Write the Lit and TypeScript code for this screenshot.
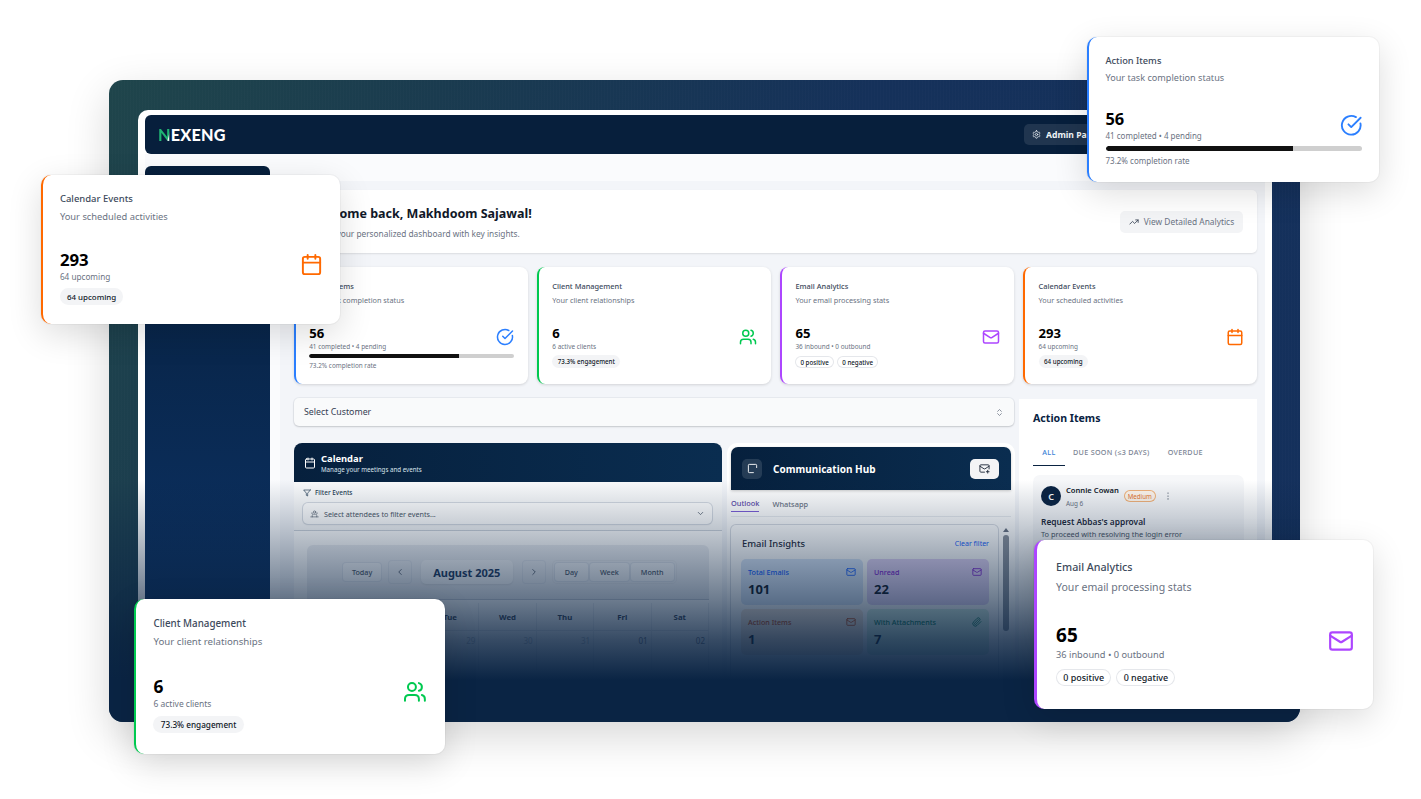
import { LitElement, html, css, svg } from "lit";
import { customElement } from "lit/decorators.js";

const I = {
  check: svg`<path d="M21.801 10A10 10 0 1 1 17 3.335"/><path d="m9 11 3 3L22 4"/>`,
  users: svg`<path d="M16 21v-2a4 4 0 0 0-4-4H6a4 4 0 0 0-4 4v2"/><circle cx="9" cy="7" r="4"/><path d="M22 21v-2a4 4 0 0 0-3-3.87"/><path d="M16 3.13a4 4 0 0 1 0 7.75"/>`,
  mail: svg`<rect x="2" y="4" width="20" height="16" rx="2"/><path d="m22 7-8.97 5.7a1.94 1.94 0 0 1-2.06 0L2 7"/>`,
  cal: svg`<path d="M8 2v4"/><path d="M16 2v4"/><rect x="3" y="4" width="18" height="18" rx="2"/><path d="M3 10h18"/>`,
  gear: svg`<path d="M12.22 2h-.44a2 2 0 0 0-2 2v.18a2 2 0 0 1-1 1.73l-.43.25a2 2 0 0 1-2 0l-.15-.08a2 2 0 0 0-2.73.73l-.22.38a2 2 0 0 0 .73 2.73l.15.1a2 2 0 0 1 1 1.72v.51a2 2 0 0 1-1 1.74l-.15.09a2 2 0 0 0-.73 2.73l.22.38a2 2 0 0 0 2.73.73l.15-.08a2 2 0 0 1 2 0l.43.25a2 2 0 0 1 1 1.73V20a2 2 0 0 0 2 2h.44a2 2 0 0 0 2-2v-.18a2 2 0 0 1 1-1.73l.43-.25a2 2 0 0 1 2 0l.15.08a2 2 0 0 0 2.73-.73l.22-.39a2 2 0 0 0-.73-2.73l-.15-.08a2 2 0 0 1-1-1.74v-.5a2 2 0 0 1 1-1.74l.15-.09a2 2 0 0 0 .73-2.73l-.22-.38a2 2 0 0 0-2.73-.73l-.15.08a2 2 0 0 1-2 0l-.43-.25a2 2 0 0 1-1-1.73V4a2 2 0 0 0-2-2z"/><circle cx="12" cy="12" r="3"/>`,
  trend: svg`<path d="M22 7 13.5 15.5 8.5 10.5 2 17"/><path d="M16 7h6v6"/>`,
  updown: svg`<path d="m7 15 5 5 5-5"/><path d="m7 9 5-5 5 5"/>`,
  down: svg`<path d="m6 9 6 6 6-6"/>`,
  left: svg`<path d="m15 18-6-6 6-6"/>`,
  right: svg`<path d="m9 18 6-6-6-6"/>`,
  funnel: svg`<polygon points="22 3 2 3 10 12.46 10 19 14 21 14 12.46 22 3"/>`,
  clip: svg`<path d="m21.44 11.05-9.19 9.19a6 6 0 0 1-8.49-8.49l8.57-8.57A4 4 0 1 1 18 8.84l-8.59 8.57a2 2 0 0 1-2.83-2.83l8.49-8.48"/>`,
  mailPlus: svg`<path d="M22 13V6a2 2 0 0 0-2-2H4a2 2 0 0 0-2 2v12c0 1.1.9 2 2 2h8"/><path d="m22 7-8.97 5.7a1.94 1.94 0 0 1-2.06 0L2 7"/><path d="M19 16v6"/><path d="M16 19h6"/>`,
  hub: svg`<path d="M21 10V5a2 2 0 0 0-2-2H5a2 2 0 0 0-2 2v14a2 2 0 0 0 2 2h9"/>`,
  people: svg`<circle cx="12" cy="8" r="3"/><path d="M6 21v-4a3 3 0 0 1 3-3h6a3 3 0 0 1 3 3v4"/><path d="M2 21h20"/><path d="M4 11h3"/><path d="M17 11h3"/>`,
  dots: svg`<circle cx="12" cy="5" r="1.5"/><circle cx="12" cy="12" r="1.5"/><circle cx="12" cy="19" r="1.5"/>`,
};

function ic(p: unknown, cls = "", sw = 2) {
  return html`<svg class="ic ${cls}" viewBox="0 0 24 24" fill="none" stroke="currentColor" stroke-width=${sw} stroke-linecap="round" stroke-linejoin="round">${p}</svg>`;
}

type Stat = { t: string; s: string; n: string; d: string; c: string; i: unknown; extra: "progress" | "pill" | "pills"; pills?: string[] };

const STATS: Record<string, Stat> = {
  action: { t: "Action Items", s: "Your task completion status", n: "56", d: "41 completed • 4 pending", c: "#2b7fff", i: I.check, extra: "progress" },
  client: { t: "Client Management", s: "Your client relationships", n: "6", d: "6 active clients", c: "#00c950", i: I.users, extra: "pill", pills: ["73.3% engagement"] },
  email: { t: "Email Analytics", s: "Your email processing stats", n: "65", d: "36 inbound • 0 outbound", c: "#ad46ff", i: I.mail, extra: "pills", pills: ["0 positive", "0 negative"] },
  cal: { t: "Calendar Events", s: "Your scheduled activities", n: "293", d: "64 upcoming", c: "#ff6900", i: I.cal, extra: "pill", pills: ["64 upcoming"] },
};

const FLOATS = [
  { k: "action", x: 1087, y: 37, w: 292, h: 145, s: 1.25 },
  { k: "cal", x: 41, y: 175, w: 299, h: 149, s: 1.28 },
  { k: "client", x: 134, y: 599, w: 311, h: 155, s: 1.325 },
  { k: "email", x: 1034, y: 540, w: 339, h: 169, s: 1.445 },
];

const TILES = [
  { l: "Total Emails", n: "101", cls: "blue", i: I.mail },
  { l: "Unread", n: "22", cls: "purple", i: I.mail },
  { l: "Action Items", n: "1", cls: "orange", i: I.mail },
  { l: "With Attachments", n: "7", cls: "green", i: I.clip },
];

@customElement("app-root")
export class AppRoot extends LitElement {
  static styles = css`
    :host { display: block; width: 1421px; height: 799px; position: relative; overflow: hidden; background: #fff; font-family: "Noto Sans", "Open Sans", sans-serif; color: #101828; }
    * { box-sizing: border-box; }
    .ic { display: block; flex: none; width: 12px; height: 12px; }

    .frame { position: absolute; left: 109px; top: 80px; width: 1191px; height: 642px; border-radius: 14px; overflow: hidden; padding: 30px 28px 0 29px; background: repeating-linear-gradient(90deg, rgba(255,255,255,.012) 0 1px, transparent 1px 3px), linear-gradient(118deg, #1f454b 0%, #1a3b4f 22%, #15315a 50%, #14305c 100%); box-shadow: 0 14px 44px rgba(0,0,0,.16); }
    .shade { position: absolute; left: 0; right: 0; top: 400px; bottom: 0; background: linear-gradient(180deg, rgba(10,35,66,0) 0px, rgba(10,35,66,.25) 50px, rgba(10,35,66,.6) 120px, rgba(10,35,66,.82) 160px, #0a2444 200px); pointer-events: none; }
    .panel { height: 100%; background: #fff; border-radius: 10px 10px 0 0; padding: 5px 7px 0; display: flex; flex-direction: column; }

    .top { height: 39px; flex: none; background: #071f3c; border-radius: 6px; display: flex; align-items: center; justify-content: space-between; padding: 0 12px 0 13px; }
    .logo { font-family: "Lato", sans-serif; font-weight: 900; font-size: 16.2px; color: #fff; letter-spacing: .2px; }
    .logo b { font-weight: 900; color: transparent; background: linear-gradient(105deg, #1fb573 72%, #e8f5ef 78%); -webkit-background-clip: text; background-clip: text; }
    .admin { width: 100px; height: 21px; border-radius: 5px; background: rgba(255,255,255,.1); color: #f1f5f9; font-size: 8.6px; font-weight: 700; display: flex; align-items: center; gap: 5px; padding-left: 8px; margin-right: 129px; margin-left: auto; }
    .admin .ic { width: 9px; height: 9px; }

    .body { flex: 1; min-height: 0; display: flex; gap: 10px; background: #fafbfd; padding-top: 12px; }
    .side { width: 125px; flex: none; background: linear-gradient(180deg, #071f3c, #0b2f5e 70%); border-radius: 6px 6px 0 0; }
    .main { flex: 1; min-width: 0; margin-top: 15px; background: #f3f5f9; padding: 9px 8px 0 14px; display: flex; flex-direction: column; gap: 14px; }

    .welcome { height: 63px; flex: none; background: #fff; border-radius: 5px; box-shadow: 0 1px 2px rgba(0,0,0,.1); display: flex; align-items: center; justify-content: space-between; padding: 0 14px 0 16px; }
    .welcome h1 { margin: 0; font-size: 12.5px; line-height: 20px; font-weight: 700; color: #101828; }
    .welcome p { margin: 4px 0 0; font-size: 8.3px; line-height: 12px; color: #6a7282; }
    .analytics { height: 22px; width: 123px; border-radius: 5px; background: #f3f4f6; color: #6a7282; font-size: 8.4px; display: flex; align-items: center; justify-content: center; gap: 5px; }
    .analytics .ic { width: 10px; height: 10px; color: #364153; }

    .stats { display: grid; grid-template-columns: repeat(4, 1fr); gap: 9.5px; flex: none; }

    .card { --u: calc(var(--s) * 10px); height: 117px; background: #fff; border-radius: calc(var(--u) * .8); border-left: calc(var(--u) * .21) solid var(--c); box-shadow: 0 1px 3px rgba(0,0,0,.14); padding: calc(var(--u) * 1.35) calc(var(--u) * 1.4) 0 calc(var(--u) * 1.32); display: flex; flex-direction: column; }
    .card.float { position: absolute; z-index: 3; border-radius: 10px; box-shadow: 0 0 0 1px rgba(0,0,0,.03), 0 10px 34px rgba(0,0,0,.14); }
    .c-t { font-size: calc(var(--u) * .74); line-height: calc(var(--u) * 1.1); font-weight: 500; color: #3d4a5c; white-space: nowrap; }
    .c-s { font-size: calc(var(--u) * .73); line-height: calc(var(--u) * 1.1); margin-top: calc(var(--u) * .3); color: #6a7282; white-space: nowrap; }
    .c-row { display: flex; align-items: center; justify-content: space-between; margin-top: calc(var(--u) * 1.92); margin-right: calc(var(--u) * -.05); }
    .c-n { font-size: calc(var(--u) * 1.31); line-height: calc(var(--u) * 1.7); font-weight: 700; color: #000; }
    .c-d { font-size: calc(var(--u) * .64); line-height: calc(var(--u) * .9); color: #6a7282; white-space: nowrap; }
    .c-ic { width: calc(var(--u) * 1.8); height: calc(var(--u) * 1.8); color: var(--c); margin-top: calc(var(--u) * -.1); }
    .pills { display: flex; gap: calc(var(--u) * .35); margin-top: calc(var(--u) * .48); }
    .pills.tight { margin-top: calc(var(--u) * .55); }
    .pill { height: calc(var(--u) * 1.3); display: flex; align-items: center; padding: 0 calc(var(--u) * .55); border-radius: calc(var(--u) * .65); background: #f3f4f6; font-size: calc(var(--u) * .62); font-weight: 500; color: #101828; white-space: nowrap; }
    .pill.line { background: #fff; box-shadow: inset 0 0 0 1px #e5e7eb; height: calc(var(--u) * 1.2); padding: 0 calc(var(--u) * .5); }
    .bar { height: calc(var(--u) * .4); margin-top: calc(var(--u) * .38); border-radius: calc(var(--u) * .2); background: #cfcfcf; overflow: hidden; }
    .bar i { display: block; height: 100%; background: #111; border-radius: calc(var(--u) * .2) 0 0 calc(var(--u) * .2); }
    .rate { margin-top: calc(var(--u) * .25); }

    .lower { flex: 1; min-height: 0; display: grid; grid-template-columns: 720px 238px; gap: 5px; }
    .left { display: flex; flex-direction: column; gap: 17px; min-width: 0; }
    .select { height: 28px; flex: none; background: #f9fafb; border-radius: 5px; box-shadow: 0 1px 2px rgba(0,0,0,.15), 0 0 0 1px #e8ebf0; display: flex; align-items: center; justify-content: space-between; padding: 0 10px; font-size: 8.8px; color: #364153; }
    .select .ic { width: 9px; height: 9px; color: #6a7282; }
    .row2 { flex: 1; min-height: 0; display: grid; grid-template-columns: 428px 288px; gap: 5px; }

    .calendar { background: #fff; border-radius: 8px 8px 0 0; display: flex; flex-direction: column; overflow: hidden; }
    .cal-head { height: 39px; flex: none; background: linear-gradient(90deg, #06203d, #0a2d50); color: #fff; display: flex; align-items: center; gap: 5px; padding: 0 10px; }
    .cal-head .ic { width: 12px; height: 12px; }
    .cal-head b { display: block; font-size: 9.4px; line-height: 13px; font-weight: 700; }
    .cal-head span { display: block; font-size: 6.2px; line-height: 9px; color: #dbe4ee; }
    .filters { height: 49px; flex: none; border-bottom: 1px solid #cdd3db; padding: 6px 10px 0 9px; background: #f9fafb; }
    .filter-t { display: flex; align-items: center; gap: 4px; font-size: 6.4px; line-height: 10px; font-weight: 500; color: #1e3a52; }
    .filter-t .ic { width: 8px; height: 8px; }
    .attendees { margin-top: 5px; height: 21px; border-radius: 5px; background: #fff; box-shadow: 0 0 0 1px #d5dae2, 0 1px 2px rgba(0,0,0,.1); display: flex; align-items: center; gap: 5px; padding: 0 7px; font-size: 7.2px; color: #4a5565; }
    .attendees .ic { width: 9px; height: 9px; }
    .attendees .ic:last-child { margin-left: auto; }
    .cal-wrap { padding: 14px 13px 0; }
    .toolbar { height: 55px; background: #eceef2; border-radius: 6px 6px 0 0; display: flex; align-items: center; justify-content: center; gap: 8px; padding-left: 3px; border-bottom: 1px solid #c9cfd8; }
    .btn { height: 18px; padding: 0 8.5px; border-radius: 3px; background: #f5f6f8; box-shadow: 0 0 0 1px #dfe3ea; font-size: 7.2px; font-weight: 500; color: #4a5565; display: flex; align-items: center; justify-content: center; }
    .btn.sq { width: 22px; height: 22px; padding: 0; background: transparent; }
    .btn.sq .ic { width: 10px; height: 10px; }
    .month { width: 92px; height: 24px; margin: 0 2px; border-radius: 5px; background: #f6f7f9; box-shadow: 0 1px 2px rgba(0,0,0,.08); font-size: 11px; font-weight: 700; color: #1e3a5f; display: flex; align-items: center; justify-content: center; }
    .views { display: flex; gap: 2px; padding: 2px; border-radius: 4px; background: #eceef2; box-shadow: 0 0 0 1px #e5e7eb; }
    .views .btn { padding: 0 10px; }
    .grid { display: grid; grid-template-columns: repeat(7, 1fr); margin-top: 3px; }
    .grid div { height: 27px; display: flex; align-items: center; justify-content: center; font-size: 7.8px; font-weight: 700; color: #364153; border-right: 1px solid #eceef2; }
    .grid .d { height: 40px; font-weight: 400; align-items: flex-start; justify-content: flex-end; padding: 4px 3px 0 0; color: #6a7282; font-size: 8px; border-top: 1px solid #e5e7eb; }
    .grid .d.off { color: #b8bec8; }

    .hub { background: #fff; border-radius: 10px 10px 0 0; padding: 4px 4px 0; display: flex; flex-direction: column; min-width: 0; }
    .hub-head { height: 43px; flex: none; background: linear-gradient(90deg, #06203d, #0a2d50); border-radius: 7px 7px 0 0; color: #fff; display: flex; align-items: center; padding: 0 12px 0 11px; box-shadow: 0 1px 3px rgba(0,0,0,.2); }
    .hub-ico { width: 20px; height: 20px; border-radius: 5px; background: rgba(255,255,255,.12); display: flex; align-items: center; justify-content: center; margin-right: 11px; }
    .hub-ico .ic { width: 11px; height: 11px; }
    .hub-head b { font-size: 10px; font-weight: 700; }
    .hub-btn { margin-left: auto; width: 29px; height: 20px; border-radius: 5px; background: #f3f4f6; color: #1e2939; display: flex; align-items: center; justify-content: center; }
    .hub-btn .ic { width: 11px; height: 11px; }
    .hub-tabs { height: 27px; flex: none; display: flex; gap: 13px; align-items: flex-end; border-bottom: 1px solid #e8ebef; font-size: 7.4px; font-weight: 500; color: #6a7282; }
    .hub-tabs span { height: 19px; padding: 1px 0 4px; line-height: 12px; }
    .hub-tabs .on { color: #5b4aa8; box-shadow: 0 1px 0 #7c5cd6; height: 15px; margin-bottom: 5px; padding: 1px 0 0; }
    .hub-body { flex: 1; display: flex; gap: 3px; padding-top: 8px; min-height: 0; }
    .insights { width: 267px; flex: none; background: #fff; border-radius: 5px; box-shadow: 0 0 0 1px #d8dce3; padding: 10px 9px 0 10px; }
    .ins-h { display: flex; justify-content: space-between; align-items: center; height: 16px; margin-bottom: 8px; padding-left: 1px; font-size: 9.4px; font-weight: 500; color: #1e2939; }
    .ins-h span { font-size: 7px; color: #155dfc; font-weight: 400; }
    .tiles { display: grid; grid-template-columns: 122px 122px; gap: 4px; }
    .tile { height: 46px; border-radius: 5px; padding: 8px 7px 0; }
    .tile-h { display: flex; justify-content: space-between; font-size: 7.2px; line-height: 11px; font-weight: 500; }
    .tile-h .ic { width: 10px; height: 10px; }
    .tile b { display: block; margin-top: 2px; font-size: 13px; line-height: 18px; font-weight: 700; color: #101828; }
    .blue { background: #d8e5f7; color: #155dfc; }
    .purple { background: #e2d4f5; color: #7e22ce; }
    .orange { background: #f5e6da; color: #c2410c; }
    .green { background: #d5f0e3; color: #047857; }
    .scroll { flex: 1; display: flex; flex-direction: column; align-items: center; gap: 3px; padding-top: 3px; }
    .scroll i { width: 0; height: 0; border-left: 3.5px solid transparent; border-right: 3.5px solid transparent; border-bottom: 4px solid #6a7282; }
    .scroll u { display: block; width: 6px; height: 96px; border-radius: 3px; background: #8a919c; }

    .items { background: #fff; padding: 12px 13px 0 14px; margin-top: 1px; min-width: 0; }
    .items h2 { margin: 0; font-size: 10.6px; line-height: 15px; font-weight: 700; color: #0a2342; }
    .tabs { margin-top: 17px; height: 22px; display: flex; align-items: flex-start; font-size: 7.2px; line-height: 10px; letter-spacing: .3px; font-weight: 500; color: #7b8494; }
    .tabs span { padding: 4px 0 0; }
    .tabs .on { width: 32px; height: 23px; text-align: center; color: #3b82d6; border-bottom: 1.2px solid #0a2342; margin-right: 8px; }
    .tabs .m { margin-right: 18px; }
    .task { margin-top: 10px; width: 211px; background: #f6f7f9; border-radius: 7px; padding: 11px 8px; height: 120px; }
    .who { display: flex; align-items: flex-start; }
    .av { width: 20px; height: 20px; border-radius: 50%; background: #0a2342; color: #fff; font-size: 9px; font-weight: 600; display: flex; align-items: center; justify-content: center; margin-right: 5px; }
    .nm { font-size: 7.6px; line-height: 10px; font-weight: 600; color: #101828; margin-top: -1px; }
    .dt { font-size: 6.4px; line-height: 9px; color: #6a7282; margin-top: 4px; }
    .med { margin: 4px 0 0 5px; height: 12px; width: 32px; border-radius: 6px; box-shadow: inset 0 0 0 1px #f2b27a; color: #e8772e; font-size: 6.2px; display: flex; align-items: center; justify-content: center; background: #fff6ec; }
    .who .ic { width: 10px; height: 10px; margin: 5px 0 0 7px; color: #4a5565; fill: currentColor; stroke: none; }
    .tt { margin-top: 8px; font-size: 8.4px; line-height: 12px; font-weight: 600; color: #1e2939; }
    .ds { font-size: 7.4px; line-height: 11px; color: #4a5565; margin-top: 1px; }
  `;

  private stat(k: string, f?: { x: number; y: number; w: number; h: number; s: number }) {
    const d = STATS[k];
    const style = f
      ? `--s:${f.s};--c:${d.c};left:${f.x}px;top:${f.y}px;width:${f.w}px;height:${f.h}px`
      : `--s:1;--c:${d.c}`;
    return html`<div class="card ${f ? "float" : ""}" style=${style}>
      <div class="c-t">${d.t}</div>
      <div class="c-s">${d.s}</div>
      <div class="c-row">
        <div><div class="c-n">${d.n}</div><div class="c-d">${d.d}</div></div>
        ${ic(d.i, "c-ic")}
      </div>
      ${d.extra === "progress"
        ? html`<div class="bar"><i style="width:73.2%"></i></div><div class="c-d rate">73.2% completion rate</div>`
        : html`<div class="pills ${d.extra === "pills" ? "tight" : ""}">${d.pills!.map((p) => html`<span class="pill ${d.extra === "pills" ? "line" : ""}">${p}</span>`)}</div>`}
    </div>`;
  }

  render() {
    return html`
      <div class="frame">
        <div class="panel">
          <div class="top">
            <div class="logo"><b>N</b>EXENG</div>
            <div class="admin">${ic(I.gear)}Admin Panel</div>
          </div>
          <div class="body">
            <div class="side"></div>
            <div class="main">
              <div class="welcome">
                <div><h1>Welcome back, Makhdoom Sajawal!</h1><p>Here's your personalized dashboard with key insights.</p></div>
                <div class="analytics">${ic(I.trend)}View Detailed Analytics</div>
              </div>
              <div class="stats">${["action", "client", "email", "cal"].map((k) => this.stat(k))}</div>
              <div class="lower">
                <div class="left">
                  <div class="select">Select Customer${ic(I.updown)}</div>
                  <div class="row2">
                    <div class="calendar">
                      <div class="cal-head">${ic(I.cal)}<div><b>Calendar</b><span>Manage your meetings and events</span></div></div>
                      <div class="filters">
                        <div class="filter-t">${ic(I.funnel)}Filter Events</div>
                        <div class="attendees">${ic(I.people, "", 1.6)}Select attendees to filter events...${ic(I.down)}</div>
                      </div>
                      <div class="cal-wrap">
                        <div class="toolbar">
                          <div class="btn">Today</div>
                          <div class="btn sq">${ic(I.left)}</div>
                          <div class="month">August 2025</div>
                          <div class="btn sq">${ic(I.right)}</div>
                          <div class="views"><div class="btn">Day</div><div class="btn">Week</div><div class="btn">Month</div></div>
                        </div>
                        <div class="grid">
                          ${["Sun", "Mon", "Tue", "Wed", "Thu", "Fri", "Sat"].map((x) => html`<div>${x}</div>`)}
                          ${["27", "28", "29", "30", "31"].map((x) => html`<div class="d off">${x}</div>`)}
                          ${["01", "02"].map((x) => html`<div class="d">${x}</div>`)}
                        </div>
                      </div>
                    </div>
                    <div class="hub">
                      <div class="hub-head">
                        <div class="hub-ico">${ic(I.hub)}</div>
                        <b>Communication Hub</b>
                        <div class="hub-btn">${ic(I.mailPlus)}</div>
                      </div>
                      <div class="hub-tabs"><span class="on">Outlook</span><span>Whatsapp</span></div>
                      <div class="hub-body">
                        <div class="insights">
                          <div class="ins-h">Email Insights<span>Clear filter</span></div>
                          <div class="tiles">
                            ${TILES.map((t) => html`<div class="tile ${t.cls}"><div class="tile-h">${t.l}${ic(t.i)}</div><b>${t.n}</b></div>`)}
                          </div>
                        </div>
                        <div class="scroll"><i></i><u></u></div>
                      </div>
                    </div>
                  </div>
                </div>
                <div class="items">
                  <h2>Action Items</h2>
                  <div class="tabs"><span class="on">ALL</span><span class="m">DUE SOON (≤3 DAYS)</span><span>OVERDUE</span></div>
                  <div class="task">
                    <div class="who">
                      <div class="av">C</div>
                      <div><div class="nm">Connie Cowan</div><div class="dt">Aug 6</div></div>
                      <div class="med">Medium</div>
                      ${ic(I.dots)}
                    </div>
                    <div class="tt">Request Abbas's approval</div>
                    <div class="ds">To proceed with resolving the login error</div>
                  </div>
                </div>
              </div>
            </div>
          </div>
        </div>
        <div class="shade"></div>
      </div>
      ${FLOATS.map((f) => this.stat(f.k, f))}
    `;
  }
}
